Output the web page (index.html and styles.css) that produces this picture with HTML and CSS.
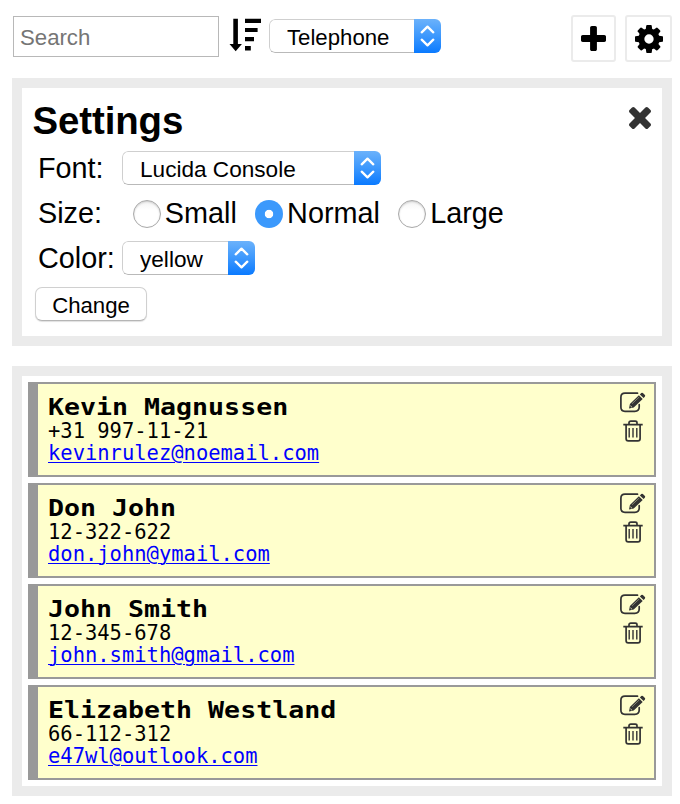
FILE: index.html
```html
<!DOCTYPE html>
<html lang="en">
<head>
<meta charset="utf-8">
<title>Contacts</title>
<link rel="stylesheet" href="styles.css">
</head>
<body>
<svg class="sprite" aria-hidden="true">
  <symbol id="chevrons" viewBox="0 0 27 34">
    <path d="M7.7 13.3 L13.5 7.7 L19.3 13.3 M7.7 20.7 L13.5 26.3 L19.3 20.7" fill="none" stroke="#fff" stroke-width="2.3" stroke-linecap="round" stroke-linejoin="round"/>
  </symbol>
  <symbol id="edit" viewBox="0 0 28 22">
    <path d="M19.5 2.2 H7 Q2.9 2.2 2.9 6.2 V16.3 Q2.9 20.3 7 20.3 H16.8 Q21.2 20.3 21.2 16 V13.7" fill="none" stroke="#333" stroke-width="1.7" stroke-linecap="round"/>
    <path d="M11 17.5 L11.9 12.9 L20.9 4.3 L24.7 7.9 L15.7 16.5 Z M21.9 3.4 L23.2 2.1 Q24 1.3 24.9 2.1 L26.9 4.1 Q27.6 4.9 26.8 5.7 L25.6 6.9 Z" fill="#333"/>
    <path d="M14 12.8 L21.2 6" stroke="#999980" stroke-width=".8"/>
    <path d="M12.5 14.9 L13.8 16.1" stroke="#ffc" stroke-width="1"/>
  </symbol>
  <symbol id="trash" viewBox="0 0 20 22">
    <path d="M.3 4.7 H19.7 M6 4.2 V2.8 Q6 1.2 7.8 1.2 H12.2 Q14 1.2 14 2.8 V4.2 M3.1 5 V18.7 Q3.1 20.9 5.3 20.9 H14.9 Q17.1 20.9 17.1 18.7 V5" fill="none" stroke="#333" stroke-width="1.7"/>
    <path d="M6.2 8 V17.5 M10 8 V17.5 M13.8 8 V17.5" stroke="#333" stroke-width="1.4"/>
  </symbol>
</svg>

<header class="toolbar">
  <input class="search" type="text" placeholder="Search">
  <svg class="sort" viewBox="0 0 32 34"><path d="M4.3 .7H8.9V26H12.9L6.7 33.2 .5 26H4.3Z M16 .7H32V5H16Z M16 10H28.6V14H16Z M16 19H25V23.2H16Z M16 28H21.8V32.4H16Z"/></svg>
  <span class="picker picker-sort">
    <select><option>Telephone</option></select>
    <svg><use href="#chevrons"/></svg>
  </span>
  <div class="actions">
    <button class="tool" aria-label="Add"><svg class="plus" viewBox="192 128 1408 1408"><path d="M1600 736v192q0 40-28 68t-68 28h-416v416q0 40-28 68t-68 28h-192q-40 0-68-28t-28-68v-416h-416q-40 0-68-28t-28-68v-192q0-40 28-68t68-28h416v-416q0-40 28-68t68-28h192q40 0 68 28t28 68v416h416q40 0 68 28t28 68z"/></svg></button>
    <button class="tool" aria-label="Settings"><svg class="cog" viewBox="128 128 1536 1536"><path d="M1152 896q0-106-75-181t-181-75-181 75-75 181 75 181 181 75 181-75 75-181zm512-109v222q0 12-8 23t-20 13l-185 28q-19 54-39 91 35 50 107 138 10 12 10 25t-9 23q-27 37-99 108t-94 71q-12 0-26-9l-138-108q-44 23-91 38-16 136-29 186-7 28-36 28h-222q-14 0-24.5-8.5t-11.5-21.5l-28-184q-49-16-90-37l-141 107q-10 9-25 9-14 0-25-11-126-114-165-168-7-10-7-23 0-12 8-23 15-21 51-66.5t54-70.5q-27-50-41-99l-183-27q-13-2-21-12.5t-8-23.5v-222q0-12 8-23t19-13l186-28q14-46 39-92-40-57-107-138-10-12-10-24 0-10 9-23 26-36 98.5-107.5t94.5-71.5q13 0 26 10l138 107q44-23 91-38 16-136 29-186 7-28 36-28h222q14 0 24.5 8.5t11.5 21.5l28 184q49 16 90 37l142-107q9-9 24-9 13 0 25 10 129 119 165 170 7 8 7 22 0 12-8 23-15 21-51 66.5t-54 70.5q26 50 41 98l183 28q13 2 21 12.5t8 23.5z"/></svg></button>
  </div>
</header>

<section class="panel settings">
  <div class="heading">
    <h1>Settings</h1>
    <svg class="close" viewBox="302 366 1188 1188"><path d="M1490 1322q0 40-28 68l-136 136q-28 28-68 28t-68-28l-294-294-294 294q-28 28-68 28t-68-28l-136-136q-28-28-28-68t28-68l294-294-294-294q-28-28-28-68t28-68l136-136q28-28 68-28t68 28l294 294 294-294q28-28 68-28t68 28l136 136q28 28 28 68t-28 68l-294 294 294 294q28 28 28 68z"/></svg>
  </div>
  <div class="row">
    <span class="label">Font:</span>
    <span class="picker picker-font">
      <select><option>Lucida Console</option></select>
      <svg><use href="#chevrons"/></svg>
    </span>
  </div>
  <div class="row">
    <span class="label">Size:</span>
    <div class="sizes">
      <label><input type="radio" name="size">Small</label>
      <label><input type="radio" name="size" checked>Normal</label>
      <label><input type="radio" name="size">Large</label>
    </div>
  </div>
  <div class="row">
    <span class="label">Color:</span>
    <span class="picker picker-color">
      <select><option>yellow</option></select>
      <svg><use href="#chevrons"/></svg>
    </span>
  </div>
  <button class="change">Change</button>
</section>

<section class="panel contacts">
  <article class="card">
    <div class="info"><h2>Kevin Magnussen</h2><p>+31 997-11-21</p><a href="#">kevinrulez@noemail.com</a></div>
    <div class="icons"><svg class="edit"><use href="#edit"/></svg><svg class="trash"><use href="#trash"/></svg></div>
  </article>
  <article class="card">
    <div class="info"><h2>Don John</h2><p>12-322-622</p><a href="#">don.john@ymail.com</a></div>
    <div class="icons"><svg class="edit"><use href="#edit"/></svg><svg class="trash"><use href="#trash"/></svg></div>
  </article>
  <article class="card">
    <div class="info"><h2>John Smith</h2><p>12-345-678</p><a href="#">john.smith@gmail.com</a></div>
    <div class="icons"><svg class="edit"><use href="#edit"/></svg><svg class="trash"><use href="#trash"/></svg></div>
  </article>
  <article class="card">
    <div class="info"><h2>Elizabeth Westland</h2><p>66-112-312</p><a href="#">e47wl@outlook.com</a></div>
    <div class="icons"><svg class="edit"><use href="#edit"/></svg><svg class="trash"><use href="#trash"/></svg></div>
  </article>
</section>
</body>
</html>
```
FILE: styles.css
```css
* { box-sizing: border-box; }

body {
  margin: 0;
  padding: 15px 8px 8px 12px;
  background: #fff;
  color: #000;
  font-family: "Liberation Sans", Arial, sans-serif;
  font-size: 28.8px;
}

svg { display: block; }
h1, h2, p { margin: 0; }
.sprite { display: none; }

.toolbar {
  display: flex;
  align-items: flex-start;
  height: 63px;
}

.search {
  width: 206px;
  height: 41px;
  margin: 1px 0 0 1px;
  padding: 3px 6px 0;
  border: 1px solid #b8b8b8;
  border-radius: 0;
  font: 22.2px "Liberation Sans", Arial, sans-serif;
}
.search::placeholder { color: #757575; opacity: 1; }

.sort {
  width: 32px;
  height: 34px;
  margin: 3px 0 0 10px;
}

.picker {
  display: flex;
  height: 34px;
  border-radius: 6px;
  overflow: hidden;
}
.picker select {
  flex: 1;
  min-width: 0;
  height: 34px;
  padding: 2px 0 0 17px;
  appearance: none;
  background: #fff;
  border: 1px solid #cfcfcf;
  border-bottom-color: #b9b9b9;
  border-right: 0;
  border-radius: 6px 0 0 6px;
  color: #000;
  font: 22.2px "Liberation Sans", Arial, sans-serif;
}
.picker svg {
  width: 27px;
  height: 34px;
  background: linear-gradient(#6bb2fb, #3d98fd 50%, #0a7aff);
}
.picker-sort { width: 172px; margin: 4px 0 0 8px; }
.picker-font { width: 259px; }
.picker-font select { font-size: 22.6px; }
.picker-color { width: 133px; }
.picker-color select { font-size: 22.6px; }

.actions {
  display: flex;
  gap: 9px;
  margin-left: auto;
}
.tool {
  display: flex;
  align-items: center;
  justify-content: center;
  width: 45px;
  height: 47px;
  padding: 0;
  background: #fff;
  border: 2px solid #ebebeb;
  border-radius: 3px;
}
.tool + .tool { width: 47px; }
.plus { width: 25px; height: 25px; }
.cog { width: 28px; height: 28px; margin-top: 1px; }

.panel { border: 10px solid #ebebeb; }

.settings {
  height: 268px;
  padding: 13px 11px 0 16px;
}
.heading {
  display: flex;
  justify-content: space-between;
  height: 50px;
  margin-left: -5.5px;
}
h1 {
  font-size: 38.4px;
  line-height: 40px;
  letter-spacing: -.1px;
}
.close {
  width: 22px;
  height: 22px;
  margin-top: 6px;
  fill: #333;
}

.row {
  display: flex;
  align-items: center;
  height: 34px;
  margin-bottom: 11px;
}
.label { width: 84px; padding-top: 1px; }

.sizes {
  display: flex;
  gap: 18.5px;
  margin-left: 11px;
  padding-top: 1px;
}
.sizes label {
  display: flex;
  align-items: center;
  gap: 3.8px;
}
.sizes input {
  width: 28px;
  height: 28px;
  margin: 1px 0 0;
  appearance: none;
  border: 1px solid #a9a9a9;
  border-radius: 50%;
  background: linear-gradient(#f3f3f3, #fff 35%);
  box-shadow: inset 0 1px 2px #ccc;
}
.sizes input:checked {
  border: 0;
  background: radial-gradient(circle, #fff 3.8px, #3b99fc 4.6px);
  box-shadow: none;
}

.change {
  display: block;
  width: 112px;
  height: 34px;
  margin: 12px 0 0 -3px;
  padding: 3px 0 0;
  background: #fff;
  border: 1px solid #d0d0d0;
  border-bottom-color: #b5b5b5;
  border-radius: 7px;
  box-shadow: 0 1px 1px #e0e0e0;
  color: #000;
  font: 22.2px "Liberation Sans", Arial, sans-serif;
}

.contacts {
  display: flex;
  flex-direction: column;
  gap: 6px;
  height: 430px;
  margin-top: 20px;
  padding: 6px;
}
.card {
  display: flex;
  justify-content: space-between;
  height: 95px;
  padding: 7px 8px 0 10px;
  background: #ffc;
  border: 2px solid #999;
  border-left-width: 10px;
}
.info {
  font-family: "DejaVu Sans Mono", monospace;
  font-size: 20.48px;
  line-height: 22px;
}
.info h2 {
  font-size: 26.6px;
  line-height: 30px;
  transform: scaleY(.88);
  transform-origin: 0 24px;
}
.info p { margin-top: -1px; line-height: 22px; }
.info a {
  display: block;
  color: #00f;
  text-decoration-thickness: 1px;
  text-underline-offset: 2px;
}
.edit { width: 28px; height: 22px; }
.trash { width: 20px; height: 22px; margin: 7px 0 0 5px; }
```
